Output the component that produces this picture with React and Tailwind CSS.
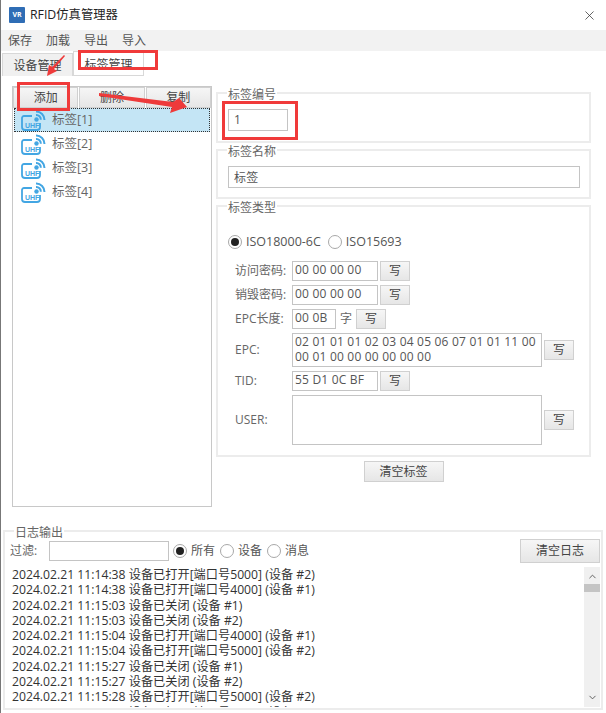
import { X, ChevronUp, ChevronDown } from "lucide-react";

const font = { fontFamily: '"Open Sans", "Noto Sans CJK SC", sans-serif' };

const logs = [
  "2024.02.21 11:14:38 设备已打开[端口号5000] (设备 #2)",
  "2024.02.21 11:14:38 设备已打开[端口号4000] (设备 #1)",
  "2024.02.21 11:15:03 设备已关闭 (设备 #1)",
  "2024.02.21 11:15:03 设备已关闭 (设备 #2)",
  "2024.02.21 11:15:04 设备已打开[端口号4000] (设备 #1)",
  "2024.02.21 11:15:04 设备已打开[端口号5000] (设备 #2)",
  "2024.02.21 11:15:27 设备已关闭 (设备 #1)",
  "2024.02.21 11:15:27 设备已关闭 (设备 #2)",
  "2024.02.21 11:15:28 设备已打开[端口号5000] (设备 #2)",
  "2024.02.21 11:15:28 设备已打开[端口号4000] (设备 #1)",
];

const UhfIcon = () => (
  <svg width="25" height="21" viewBox="0 0 25 21" fill="none" stroke="#43a6e3" className="shrink-0">
    <path d="M11 6H3a2 2 0 0 0-2 2v9a3 3 0 0 0 3 3h12a3 3 0 0 0 3-3v-4" strokeWidth="1.800" />
    <circle cx="15.500" cy="9.500" r="2.200" fill="#43a6e3" stroke="none" />
    <path d="M15 5a4.500 4.500 0 0 1 4.800 4.800M15 1.500a8.300 8.300 0 0 1 8.500 8.500" strokeWidth="2" />
    <text x="4" y="18" fontSize="7" fontWeight="700" fill="#43a6e3" stroke="none" fontFamily="Liberation Sans, sans-serif">UHF</text>
  </svg>
);

const Btn = ({ children, className = "" }) => (
  <button className={`flex items-center justify-center border border-[#d0d0d0] bg-gradient-to-b from-[#f6f6f6] to-[#e6e6e6] text-[#444] text-[12px] ${className}`}>
    {children}
  </button>
);

const Write = ({ className = "" }) => <Btn className={`w-[30px] h-[20px] shrink-0 ${className}`}>写</Btn>;

const Radio = ({ on, label }) => (
  <span className="flex items-center gap-[4px]">
    <span className="w-[14px] h-[14px] rounded-full border border-[#a8a8a8] flex items-center justify-center">
      {on && <span className="w-[8px] h-[8px] rounded-full bg-[#222]" />}
    </span>
    {label}
  </span>
);

const Group = ({ title, className = "", children }) => (
  <fieldset className={`border-2 border-[#ececec] ${className}`}>
    <legend className="ml-[9px] px-[1px] text-[12px] leading-[14px] text-[#666] translate-y-[2px]">{title}</legend>
    {children}
  </fieldset>
);

const Field = ({ className = "", children }) => (
  <div className={`border border-[#c4c4c4] px-[2px] text-[12px] leading-[15px] text-[#555] tracking-[0.2px] ${className}`}>{children}</div>
);

const Label = ({ children }) => <span className="w-[57px] shrink-0 text-[12px] text-[#666]">{children}</span>;

export default function App() {
  return (
    <div style={font} className="relative w-[606px] h-[713px] overflow-hidden bg-white border-l border-[#777] flex flex-col">
      <div className="h-[30px] shrink-0 flex items-center pl-[8px] pr-[9px]">
        <div className="w-[16px] h-[16px] bg-[#2f6db5] rounded-[1px] flex items-center justify-center text-[7px] font-bold text-white">VR</div>
        <span className="ml-[5px] text-[12.300px] text-[#222]">RFID仿真管理器</span>
        <X className="ml-auto text-[#333]" size={15} strokeWidth={1.2} />
      </div>

      <div className="h-[21px] shrink-0 bg-[#f2f2f2] flex items-center gap-[14px] pl-[7px] text-[12px] text-[#555]">
        <span>保存</span>
        <span>加载</span>
        <span>导出</span>
        <span>导入</span>
      </div>

      <div className="h-[25px] shrink-0 flex items-end pl-[1px]">
        <div className="w-[71px] h-[23px] border border-b-0 border-[#d8d8d8] bg-[#f0f0f0] text-center text-[12px] leading-[24px] text-[#444]">设备管理</div>
        <div className="w-[71px] h-[25px] border border-[#d8d8d8] bg-white text-center text-[12px] leading-[26px] text-[#444]">标签管理</div>
      </div>

      <div className="h-[448px] shrink-0 flex pl-[11px] pt-[10px]">
        <div className="w-[200px] h-[421px] border border-[#c8c8c8] shrink-0 flex flex-col">
          <div className="flex gap-[1px] h-[21px] shrink-0">
            <Btn className="flex-1">添加</Btn>
            <Btn className="flex-1">删除</Btn>
            <Btn className="flex-1">复制</Btn>
          </div>
          <div className="flex flex-col text-[12.500px] text-[#666]">
            <div className="h-[24px] mx-[1px] flex items-center gap-[6px] pl-[6px] bg-[#c4e5f5] border border-dotted border-[#333]">
              <UhfIcon />
              <span>标签[1]</span>
            </div>
            {[2, 3, 4].map((n) => (
              <div key={n} className="h-[24px] mx-[1px] flex items-center gap-[6px] pl-[7px]">
                <UhfIcon />
                <span>标签[{n}]</span>
              </div>
            ))}
          </div>
        </div>

        <div className="w-[375px] ml-[4px] shrink-0 flex flex-col">
          <Group title="标签编号" className="h-[57px]">
            <div className="pl-[10px] pt-[9px]">
              <Field className="w-[60px] h-[22px] pl-[5px] leading-[20px]">1</Field>
            </div>
          </Group>
          <Group title="标签名称" className="h-[56px]">
            <div className="pl-[10px] pt-[9px]">
              <Field className="w-[352px] h-[22px] pl-[5px] leading-[21px]">标签</Field>
            </div>
          </Group>
          <Group title="标签类型" className="h-[258px]">
            <div className="pl-[10px]">
              <div className="flex items-center gap-[7px] mt-[19px] h-[20px] text-[12.500px] text-[#555]">
                <Radio on label="ISO18000-6C" />
                <Radio label="ISO15693" />
              </div>
              <div className="flex flex-col gap-[4px] pl-[7px] mt-[9px]">
                <div className="flex items-center">
                  <Label>访问密码:</Label>
                  <Field className="w-[86px] h-[20px]">00 00 00 00</Field>
                  <Write className="ml-[2px]" />
                </div>
                <div className="flex items-center">
                  <Label>销毁密码:</Label>
                  <Field className="w-[86px] h-[20px]">00 00 00 00</Field>
                  <Write className="ml-[2px]" />
                </div>
                <div className="flex items-center">
                  <Label>EPC长度:</Label>
                  <Field className="w-[44px] h-[20px]">00 0B</Field>
                  <span className="w-[20px] text-center text-[12px] text-[#666]">字</span>
                  <Write />
                </div>
                <div className="flex items-center">
                  <Label>EPC:</Label>
                  <Field className="w-[250px] h-[34px]">02 01 01 01 02 03 04 05 06 07 01 01 11 00 00 01 00 00 00 00 00 00</Field>
                  <Write className="ml-[2px]" />
                </div>
                <div className="flex items-center">
                  <Label>TID:</Label>
                  <Field className="w-[86px] h-[20px]">55 D1 0C BF</Field>
                  <Write className="ml-[2px]" />
                </div>
                <div className="flex items-center">
                  <Label>USER:</Label>
                  <Field className="w-[250px] h-[50px]" />
                  <Write className="ml-[2px]" />
                </div>
              </div>
            </div>
          </Group>
          <Btn className="w-[80px] h-[21px] mt-[4px] self-center">清空标签</Btn>
        </div>
      </div>

      <Group title="日志输出" className="ml-[2px] w-[600px] h-[186px]">
        <div className="pl-[5px]">
          <div className="flex items-center h-[24px] mt-[1px] text-[12px] text-[#666]">
            <span className="w-[39px]">过滤:</span>
            <div className="w-[120px] h-[20px] border border-[#c4c4c4]" />
            <div className="flex items-center gap-[5px] ml-[4px] text-[#555]">
              <Radio on label="所有" />
              <Radio label="设备" />
              <Radio label="消息" />
            </div>
            <Btn className="ml-auto mr-[1px] w-[80px] h-[24px] border-[#b8b8b8]">清空日志</Btn>
          </div>
          <div className="flex mt-[4px] h-[140px]">
            <div className="flex-1 pl-[2px] text-[12.200px] leading-[15.300px] text-[#333] overflow-hidden whitespace-nowrap">
              {logs.map((l, i) => (
                <div key={i}>{l}</div>
              ))}
            </div>
            <div className="w-[16px] mr-[1px] bg-[#f0f0f0] flex flex-col items-center justify-between">
              <div className="w-full flex flex-col items-center">
                <ChevronUp size={11} strokeWidth={2} className="mt-[4px] text-[#555]" />
                <div className="w-full h-[8px] bg-[#c4c4c4] mt-[2px]" />
              </div>
              <ChevronDown size={11} strokeWidth={2} className="mb-[4px] text-[#555]" />
            </div>
          </div>
        </div>
      </Group>

      {/* red annotations drawn over the window */}
      <div className="absolute left-[77px] top-[50px] w-[80px] h-[20px] border-[3px] border-[#f03a3a]" />
      <div className="absolute left-[16px] top-[82px] w-[53px] h-[29px] border-[3px] border-[#f03a3a]" />
      <div className="absolute left-[221px] top-[101px] w-[76px] h-[39px] border-[3px] border-[#f03a3a]" />
      <svg className="absolute left-[-1px] top-0" width="606" height="713" fill="#ee3a3a">
        <polygon points="65,56 54,69 57,71 47,76 49,65 52,67 64,55" />
        <polygon points="99,93 173,102 179,98 187,107 170,113 172,107 99,96" />
      </svg>
    </div>
  );
}
